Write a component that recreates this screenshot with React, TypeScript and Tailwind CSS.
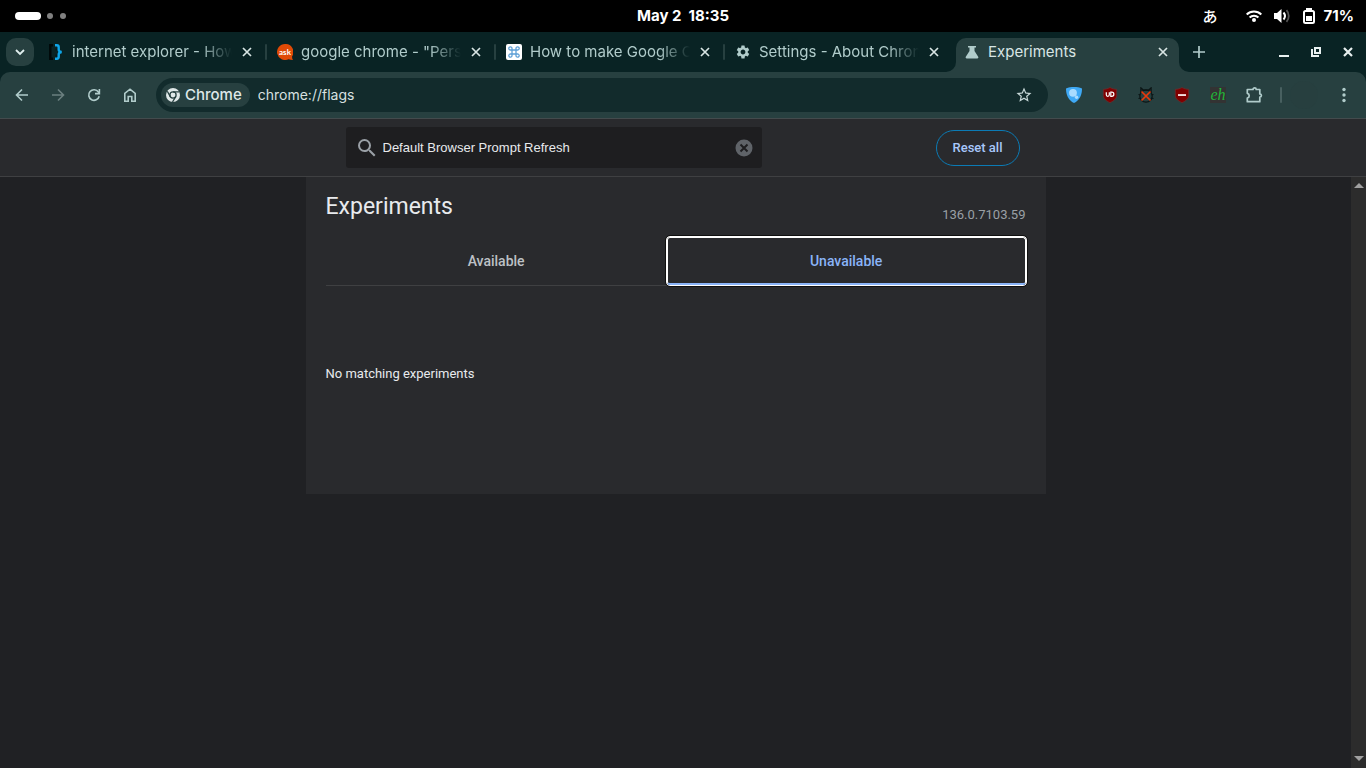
import React, { useState } from 'react';
import { MdSettings, MdSearch, MdStarBorder } from 'react-icons/md';

const CloseIcon = () => (
	<svg width="10" height="10" viewBox="0 0 10 10" fill="none" stroke="currentColor" strokeWidth="1.7">
		<path d="M1 1l8 8M9 1L1 9" />
	</svg>
);

const BracesIcon = () => (
	<svg width="16" height="16" viewBox="0 0 16 16" fill="none">
		<path d="M5 1.200H2.300v13.600H5" stroke="#020808" strokeWidth="2.400" />
		<path d="M7.500 5.500h2M7.500 11.500h2" stroke="#04181a" strokeWidth="2" />
		<path d="M7 1.300h1.800c1.400 0 1.900.7 1.900 1.900v2.300c0 1.500.6 2.300 3 2.500-2.400.2-3 1-3 2.500v2.300c0 1.200-.5 1.900-1.900 1.900H7" stroke="#0ea5e9" strokeWidth="2.400" />
	</svg>
);

const AskIcon = () => (
	<svg width="16" height="16" viewBox="0 0 16 16">
		<path d="M8 0a8 8 0 1 0 3.500 15.200c1.300.6 2.900.8 4.500.8-.7-1-1-2.200-.9-3.600A8 8 0 0 0 8 0z" fill="#e04a06" />
		<text x="8" y="10.500" textAnchor="middle" fontSize="8" fontWeight="700" fill="#fff" fontFamily="Lato, sans-serif">ask</text>
	</svg>
);

const CommandIcon = () => (
	<svg width="16" height="16" viewBox="0 0 16 16" fill="none">
		<rect width="16" height="16" rx="2" fill="#fff" />
		<path d="M6 6h4v4H6zM6 6H4.600A1.600 1.600 0 1 1 6 4.600zM10 6V4.600A1.600 1.600 0 1 1 11.400 6zM10 10h1.400a1.600 1.600 0 1 1-1.400 1.400zM6 10v1.400A1.600 1.600 0 1 1 4.600 10z" stroke="#5c9fd6" strokeWidth="1.300" />
	</svg>
);

const FlaskIcon = () => (
	<svg width="16" height="16" viewBox="0 0 16 16" fill="currentColor">
		<path d="M4 2h8v1.600h-1.500V7l3.700 5.800c.5.800 0 1.600-.9 1.600H2.700c-.9 0-1.400-.8-.9-1.600L5.500 7V3.600H4z" />
	</svg>
);

const BackIcon = () => (
	<svg width="16" height="16" viewBox="0 0 16 16" fill="none" stroke="currentColor" strokeWidth="1.600">
		<path d="M14 8H3M8 2.500L2.500 8 8 13.500" />
	</svg>
);

const ForwardIcon = () => (
	<svg width="16" height="16" viewBox="0 0 16 16" fill="none" stroke="currentColor" strokeWidth="1.600">
		<path d="M2 8h11M8 2.500L13.500 8 8 13.500" />
	</svg>
);

const ReloadIcon = () => (
	<svg width="16" height="16" viewBox="0 0 16 16" fill="none" stroke="currentColor" strokeWidth="1.600">
		<path d="M13.200 9.200A5.300 5.300 0 1 1 12.400 5l1 1.300" />
		<path d="M13.400 2v4.600H9" />
	</svg>
);

const HomeIcon = () => (
	<svg width="16" height="16" viewBox="0 0 16 16" fill="none" stroke="currentColor" strokeWidth="1.600">
		<path d="M2.800 14.200V6.300L8 2.200l5.200 4.100v7.900H9.800V9.500H6.200v4.700z" />
	</svg>
);

const ChromeIcon = () => (
	<svg width="14" height="14" viewBox="0 0 14 14" fill="none">
		<circle cx="7" cy="7" r="7" fill="#dfe8e8" />
		<circle cx="7" cy="7" r="3.100" stroke="#274040" strokeWidth="1.300" />
		<path d="M7 3.900h6.400M4.300 8.600L1.300 3.200M9.700 8.600l-3.200 5.400" stroke="#274040" strokeWidth="1.300" />
	</svg>
);

const GlobeShieldIcon = () => (
	<svg width="16" height="16" viewBox="0 0 16 16">
		<path d="M0 1.500C2.500.3 5.200 0 8 0s5.500.3 8 1.500C16 8 13.500 13.500 8 16 2.500 13.500 0 8 0 1.500z" fill="#3fa9f5" />
		<circle cx="7" cy="5.800" r="3.900" fill="#a9dcff" />
		<circle cx="10.600" cy="10.300" r="1.700" fill="#a9dcff" />
	</svg>
);

const shieldPath = 'M8 .5c2 1.300 4.300 1.700 6.700 1.800v6.200c0 3.400-3.200 5.500-6.700 7.200-3.500-1.700-6.700-3.800-6.700-7.200V2.300C3.700 2.200 6 1.800 8 .5z';

const UBlockIcon = () => (
	<svg width="16" height="16" viewBox="0 0 16 16" fill="none">
		<path d={shieldPath} fill="#800000" stroke="#6b3030" strokeWidth=".7" />
		<path d="M4.300 5.200v2.600a1.500 1.500 0 0 0 3 0V5.200" stroke="#fff" strokeWidth="1.200" />
		<path d="M8.800 5.200v4.100h1a2 2 0 0 0 0-4.100z" stroke="#fff" strokeWidth="1.200" />
	</svg>
);

const CatIcon = () => (
	<svg width="16" height="16" viewBox="0 0 16 16" fill="none">
		<circle cx="8" cy="9" r="6.200" stroke="#0b1414" strokeWidth="1.200" />
		<path d="M2.900 5.500V.8l2.600 2.400M13.100 5.500V.8l-2.600 2.400M5.500 3.200h5M.5 7.500l2 .5M.5 11.500l2-.5M15.500 7.500l-2 .5M15.500 11.500l-2-.5" stroke="#0b1414" strokeWidth="1.200" />
		<path d="M3.500 4.500l9 9M12.500 4.500l-9 9" stroke="#e8390c" strokeWidth="1.700" />
	</svg>
);

const BlockerIcon = () => (
	<svg width="16" height="16" viewBox="0 0 16 16">
		<path d={shieldPath} fill="#800000" stroke="#6b3030" strokeWidth=".7" />
		<path d="M4 7.100h8v1.900H4z" fill="#f3dede" />
	</svg>
);

const PuzzleIcon = () => (
	<svg width="18" height="18" viewBox="0 0 18 18" fill="none" stroke="currentColor" strokeWidth="1.700">
		<path d="M2.300 3.500H8a1.600 1.600 0 0 1 3.200 0h3.600V8a1.600 1.600 0 0 1 0 3.200v4.500H2.300V12a2.400 2.400 0 0 0 0-4.700z" strokeLinejoin="round" />
	</svg>
);

const TABS = [
	{ title: 'internet explorer - How', icon: <BracesIcon /> },
	{ title: 'google chrome - "Pers', icon: <AskIcon /> },
	{ title: 'How to make Google C', icon: <CommandIcon /> },
	{ title: 'Settings - About Chron', icon: <MdSettings size={16} /> },
	{ title: 'Experiments', icon: <FlaskIcon /> },
];

const EXTENSIONS = [
	{ name: 'Globe shield', icon: <GlobeShieldIcon /> },
	{ name: 'uBlock', icon: <UBlockIcon /> },
	{ name: 'Cat', icon: <CatIcon /> },
	{ name: 'Blocker', icon: <BlockerIcon /> },
	{ name: 'eh', icon: <span className="flex h-4 w-4 items-center justify-center bg-[#333333] font-['Liberation_Serif',serif] text-base leading-4 text-[#22b53a] italic">eh</span> },
	{ name: 'Extensions', icon: <PuzzleIcon /> },
];

function SystemBar() {
	return (
		<div className="grid h-8 grid-cols-3 items-center bg-black text-[15px] font-bold text-white">
			<div className="flex items-center gap-1.5 pl-[15px]">
				<span className="h-2 w-[26px] rounded-full bg-white" />
				<span className="h-1.5 w-1.5 rounded-full bg-[#808080]" />
				<span className="ml-px h-1.5 w-1.5 rounded-full bg-[#808080]" />
			</div>
			<div className="text-center whitespace-pre">May 2  18:35</div>
			<div className="flex items-center justify-end pr-3">
				<span className="mr-7 font-['Noto_Sans_CJK_JP',sans-serif] text-[15px] leading-5 font-medium">あ</span>
				<svg className="mr-3" width="16" height="16" viewBox="0 0 16 16" fill="none" stroke="#fff" strokeWidth="2">
					<path d="M.7 6.500a10.300 10.300 0 0 1 14.600 0M3.600 9.500a6.200 6.200 0 0 1 8.800 0" />
					<circle cx="8" cy="12" r="2" fill="#fff" stroke="none" />
				</svg>
				<svg className="mr-3" width="16" height="16" viewBox="0 0 16 16" fill="none">
					<path d="M0 5h3l4.500-4v14L3 11H0z" fill="#fff" />
					<path d="M9.500 4.500c1.700 2 1.700 5 0 7" stroke="#fff" strokeWidth="2" />
					<path d="M12.500 2.200c3 3.300 3 8.300 0 11.600" stroke="#555" strokeWidth="1.800" />
				</svg>
				<svg className="mr-2" width="14" height="16" viewBox="0 0 14 16" fill="none">
					<path d="M4 0h6v2.500H4z" fill="#fff" />
					<rect x="2" y="3" width="10" height="12" rx="1.500" stroke="#fff" strokeWidth="2" />
					<path d="M4 8h6v5H4z" fill="#fff" />
				</svg>
				<span>71%</span>
			</div>
		</div>
	);
}

function TabStrip() {
	return (
		<div className="flex h-10 items-end bg-[#092324] text-[15px] text-[#b1cccb]">
			<div className="flex h-10 w-10 shrink-0 items-center pl-1.5">
				<button aria-label="Search tabs" className="flex h-7 w-7 items-center justify-center rounded-[10px] bg-[#274040] text-[#e0eeee]">
					<svg width="10" height="8" viewBox="0 0 10 8" fill="none" stroke="currentColor" strokeWidth="1.800"><path d="M1 2l4 4 4-4" /></svg>
				</button>
			</div>
			{TABS.map((tab, index) => {
				const active = index === TABS.length - 1;
				return (
					<React.Fragment key={tab.title}>
						{index > 0 && (
							<div className="flex h-10 w-1.5 shrink-0 items-center justify-center">
								{!active && <span className="h-4 w-0.5 rounded-full bg-[#274040]" />}
							</div>
						)}
						<div className={active ? 'relative flex h-[34px] w-[223px] items-center rounded-t-[10px] bg-[#274040] pb-1.5 pl-2 text-[#d8e5e4]' : 'flex h-[34px] w-[223px] items-center pb-1.5 pl-2'}>
							{active && (
								<>
									<span className="absolute bottom-0 -left-2.5 h-2.5 w-2.5 bg-[#274040]"><span className="block h-full rounded-br-[10px] bg-[#092324]" /></span>
									<span className="absolute -right-2.5 bottom-0 h-2.5 w-2.5 bg-[#274040]"><span className="block h-full rounded-bl-[10px] bg-[#092324]" /></span>
								</>
							)}
							<span className="shrink-0 text-[#b1cccb]">{tab.icon}</span>
							<span className={active ? 'ml-2 flex-1 whitespace-nowrap' : 'ml-2 w-40 whitespace-nowrap [mask-image:linear-gradient(to_right,black_80%,transparent)]'}>{tab.title}</span>
							<button aria-label={'Close ' + tab.title} className="mr-1.5 ml-auto flex h-5 w-5 shrink-0 items-center justify-center text-[#d8e5e4]"><CloseIcon /></button>
						</div>
					</React.Fragment>
				);
			})}
			<button aria-label="New tab" className="ml-1.5 flex h-10 w-7 items-center justify-center">
				<svg width="12" height="12" viewBox="0 0 12 12" stroke="currentColor" strokeWidth="1.700"><path d="M6 0v12M0 6h12" /></svg>
			</button>
			<div className="ml-auto flex h-10 items-center pr-0.5 text-[#e8f0f0]">
				<button aria-label="Minimize" className="flex h-8 w-8 items-center justify-center">
					<svg width="10" height="10" viewBox="0 0 10 10" fill="currentColor"><path d="M0 8h10v2H0z" /></svg>
				</button>
				<button aria-label="Restore" className="flex h-8 w-8 items-center justify-center">
					<svg width="10" height="10" viewBox="0 0 10 10" fill="none" stroke="currentColor" strokeWidth="2"><path d="M4 1h5v5H4zM1 2v7h7" /></svg>
				</button>
				<button aria-label="Close" className="flex h-8 w-8 items-center justify-center">
					<svg width="10" height="10" viewBox="0 0 10 10" fill="none" stroke="currentColor" strokeWidth="2.200"><path d="M1 1l8 8M9 1L1 9" /></svg>
				</button>
			</div>
		</div>
	);
}

function Toolbar() {
	const [url, setUrl] = useState('chrome://flags');
	return (
		<div className="bg-[#092324]">
			<div className="flex h-[47px] items-center rounded-t-[10px] border-b border-[#434b4d] bg-[#274040] pr-1 pl-1 text-[#b1cccb]">
				<button aria-label="Back" className="flex h-9 w-9 items-center justify-center"><BackIcon /></button>
				<button aria-label="Forward" className="flex h-9 w-9 items-center justify-center text-[#6b7f7f]"><ForwardIcon /></button>
				<button aria-label="Reload" className="flex h-9 w-9 items-center justify-center"><ReloadIcon /></button>
				<button aria-label="Home" className="flex h-9 w-9 items-center justify-center"><HomeIcon /></button>
				<div className="mx-2 flex h-[34px] flex-1 items-center rounded-full bg-[#122b2c] pr-[15px] pl-[5px]">
					<div className="flex h-6 items-center gap-[5px] rounded-full bg-[#274040] pr-2 pl-[5px] text-[15px] font-medium text-[#dfe8e8]">
						<ChromeIcon />
						Chrome
					</div>
					<input aria-label="Address" className="ml-2 min-w-0 flex-1 bg-transparent text-sm text-[#d8e0e0] outline-none" value={url} onChange={(e) => setUrl(e.target.value)} />
					<button aria-label="Bookmark" className="text-[#c8d8d8]"><MdStarBorder size={18} /></button>
				</div>
				{EXTENSIONS.map((ext) => (
					<button key={ext.name} aria-label={ext.name} className="flex h-9 w-9 items-center justify-center">{ext.icon}</button>
				))}
				<span className="ml-2 h-4 w-0.5 rounded-full bg-[#486060]" />
				<button aria-label="Profile" className="mx-2 h-7 w-7 rounded-full bg-[#273f3f]" />
				<button aria-label="Menu" className="flex h-9 w-9 items-center justify-center">
					<svg width="4" height="16" viewBox="0 0 4 16" fill="currentColor"><circle cx="2" cy="2.500" r="1.700" /><circle cx="2" cy="8" r="1.700" /><circle cx="2" cy="13.500" r="1.700" /></svg>
				</button>
			</div>
		</div>
	);
}

function FlagsPage() {
	const [search, setSearch] = useState('Default Browser Prompt Refresh');
	return (
		<div className="flex flex-1 flex-col bg-[#202124] font-[Roboto,sans-serif]">
			<div className="border-b border-[#3f4042] bg-[#292a2d] pr-[15px]">
				<div className="mx-auto flex h-[57px] max-w-[740px] items-center justify-between pr-[26px] pl-10">
					<div className="flex h-[41px] w-[416px] items-center rounded-[3px] bg-[#1e1e20] pr-[9px] pl-[9px]">
						<MdSearch size={24} className="text-[#9aa0a6]" />
						<input aria-label="Search flags" className="ml-1 min-w-0 flex-1 bg-transparent font-['Liberation_Sans',sans-serif] text-[13px] text-[#e8eaed] outline-none" value={search} onChange={(e) => setSearch(e.target.value)} />
						<button aria-label="Clear search" onClick={() => setSearch('')}>
							<svg width="18" height="18" viewBox="0 0 18 18" fill="none"><circle cx="9" cy="9" r="8.500" fill="#5f6368" /><path d="M5.500 5.500l7 7M12.500 5.500l-7 7" stroke="#1e1e20" strokeWidth="2" /></svg>
						</button>
					</div>
					<button className="h-9 w-[84px] rounded-full border border-[#0b7bb5] text-[13px] font-medium text-[#a8c7fa]">Reset all</button>
				</div>
			</div>
			<div className="flex flex-1">
				<div className="flex-1">
					<main className="mx-auto min-h-[317px] max-w-[740px] bg-[#292a2d] px-5 pt-3.5 text-[#e8eaed]">
						<div className="flex items-end justify-between">
							<h1 className="text-[23px] leading-8">Experiments</h1>
							<span className="-mb-0.5 text-[13px] leading-5 text-[#9aa0a6]">136.0.7103.59</span>
						</div>
						<div role="tablist" className="mt-3.5 flex items-start text-sm font-medium">
							<button role="tab" aria-selected="false" className="h-[49px] flex-auto border-b border-[#3f4042] text-[#bdc1c6]">Available</button>
							<button role="tab" aria-selected="true" className="h-12 flex-auto rounded-[3px] border-x border-t border-b-2 border-x-white border-t-white border-b-[#8ab4f8] text-[#8ab4f8] ring-1 ring-white outline-1 outline-offset-1 outline-[#101010]">Unavailable</button>
						</div>
						<p className="mt-[78px] text-[13px] leading-5">No matching experiments</p>
					</main>
				</div>
				<div className="flex w-[15px] flex-col items-center justify-between bg-[#2c2c2c] pt-1.5 pb-[7px]">
					<svg width="10" height="5" viewBox="0 0 10 5" fill="#a0a0a0"><path d="M0 5l5-5 5 5z" /></svg>
					<svg width="10" height="5" viewBox="0 0 10 5" fill="#a0a0a0"><path d="M0 0l5 5 5-5z" /></svg>
				</div>
			</div>
		</div>
	);
}

function App() {
	return (
		<div className="flex min-h-screen flex-col font-[Inter,sans-serif]">
			<SystemBar />
			<TabStrip />
			<Toolbar />
			<FlagsPage />
		</div>
	);
}

export default App;
